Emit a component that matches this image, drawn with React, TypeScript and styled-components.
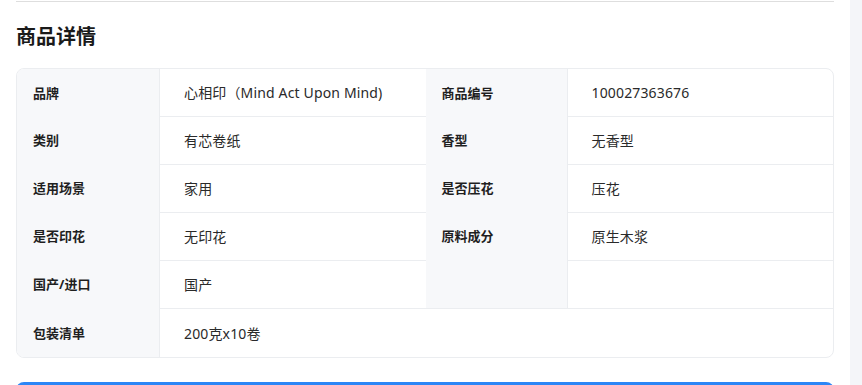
import React from "react"
import styled, { createGlobalStyle } from "styled-components"

const GlobalStyle = createGlobalStyle`
  html, body {
    margin: 0;
    padding: 0;
    background: #f4f5f9;
    font-family: "Noto Sans", "Noto Sans CJK SC", sans-serif;
    color: #222;
  }
`

const Page = styled.div`
  display: flex;
  height: 385px;
  overflow: hidden;
`

const Main = styled.div`
  width: 850px;
  background: #ffffff;
  padding: 0 16px;
  box-sizing: border-box;
  overflow: hidden;
`

const Rule = styled.div`
  margin-top: 1px;
  height: 1px;
  background: #dedede;
`

const Title = styled.h2`
  margin: 21px 0 17px 0;
  font-size: 20px;
  line-height: 28px;
  font-weight: 700;
  color: #1a1a1a;
`

const Table = styled.div`
  display: grid;
  grid-template-columns: 143px 1fr 142px 1fr;
  grid-template-rows: 47px repeat(4, 48px) 49px;
  border: 1px solid #ebedf0;
  border-radius: 8px;
  overflow: hidden;
`

const Label = styled.div`
  display: flex;
  align-items: center;
  padding: 0 16px 1px 16px;
  background: #f7f8fa;
  border-right: 1px solid #ebedf0;
  font-size: 13px;
  font-weight: 700;
  color: #1f1f1f;
`

const Value = styled.div<{ $first?: boolean; $span?: number }>`
  display: flex;
  align-items: center;
  padding: 0 24px 1px 24px;
  font-size: 14px;
  letter-spacing: 0.15px;
  color: #2a2a2a;
  border-top: ${(p) => (p.$first ? "none" : "1px solid #ebedf0")};
  grid-column: ${(p) => (p.$span ? `span ${p.$span}` : "auto")};
`

const ActionBar = styled.div`
  margin-top: 24px;
  height: 40px;
  flex-shrink: 0;
  border-radius: 8px;
  background: #2b86f6;
`

const Side = styled.div`
  flex: 1;
  background: #f4f5f9;
`

type Row = [string, string, string, string]

const rows: Row[] = [
  ["品牌", "心相印（Mind Act Upon Mind)", "商品编号", "100027363676"],
  ["类别", "有芯卷纸", "香型", "无香型"],
  ["适用场景", "家用", "是否压花", "压花"],
  ["是否印花", "无印花", "原料成分", "原生木浆"],
  ["国产/进口", "国产", "", ""],
]

export default function App() {
  return (
    <Page>
      <GlobalStyle />
      <Main>
        <Rule />
        <Title>商品详情</Title>
        <Table>
          {rows.map((r, i) => (
            <React.Fragment key={i}>
              <Label>{r[0]}</Label>
              <Value $first={i === 0}>{r[1]}</Value>
              <Label>{r[2]}</Label>
              <Value $first={i === 0}>{r[3]}</Value>
            </React.Fragment>
          ))}
          <Label>包装清单</Label>
          <Value $span={3}>200克x10卷</Value>
        </Table>
        <ActionBar />
      </Main>
      <Side />
    </Page>
  )
}
